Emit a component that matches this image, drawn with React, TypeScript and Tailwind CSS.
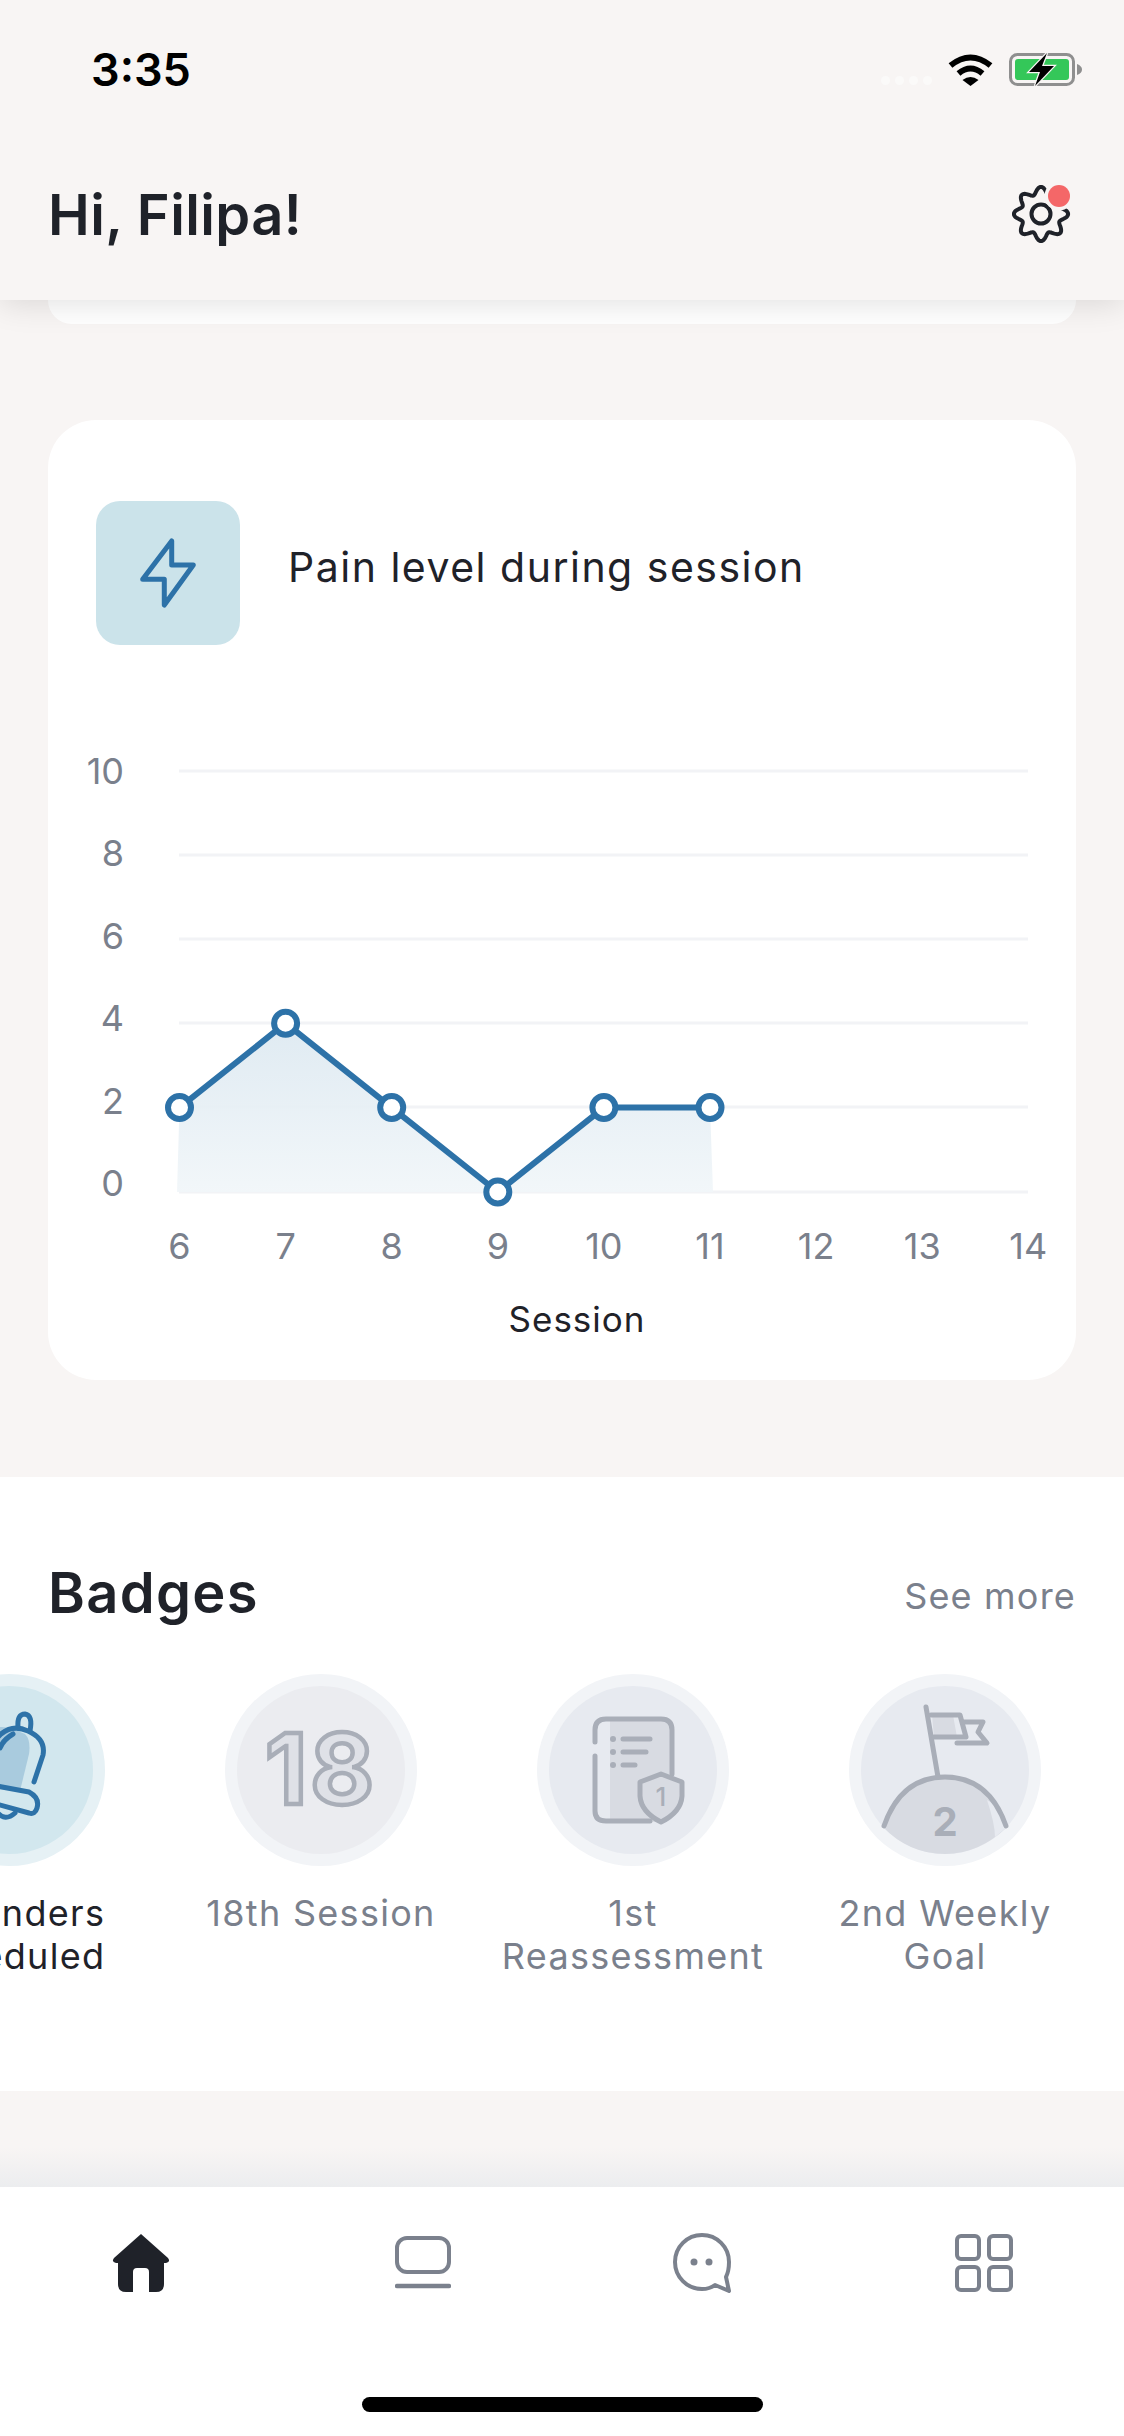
import React from "react";

const blue = "#2d72a8";
const grey = "#a9aeb8";
const greyFill = "#d8dbe2";

function gearPath() {
  const pts: string[] = [];
  for (let i = 0; i <= 240; i++) {
    const t = (i / 240) * Math.PI * 2;
    const r = 23.5 + 3.6 * Math.cos(8 * (t + Math.PI / 2));
    pts.push(`${(29 + r * Math.cos(t)).toFixed(2)} ${(29 + r * Math.sin(t)).toFixed(2)}`);
  }
  return "M" + pts.join("L") + "Z";
}

function Wifi() {
  return (
    <svg width="45" height="33" viewBox="0 0 45 33" fill="none" stroke="#000">
      <path d="M2.5 12.5Q22.5 -3.5 42.5 12.5" strokeWidth="6" />
      <path d="M10.5 20.5Q22.5 10.5 34.5 20.5" strokeWidth="6" />
      <path d="M14.5 27Q22.5 21 30.5 27L22.5 33Z" fill="#000" stroke="none" />
    </svg>
  );
}

function Battery() {
  return (
    <svg width="73" height="35" viewBox="0 0 73 35" fill="none">
      <rect x="1.5" y="2.5" width="63" height="30" rx="7" stroke="#8f8f8f" strokeWidth="3" />
      <rect x="6" y="7" width="54" height="21" rx="3" fill="#34c759" />
      <path d="M68 12q5 2 5 5.500t-5 5.500z" fill="#8f8f8f" />
      <path d="M38 1L20 20h11l-5 14 19-20H33z" fill="#000" stroke="#f8f5f4" strokeWidth="2.500" paintOrder="stroke" />
    </svg>
  );
}

function Gear() {
  return (
    <svg width="60" height="60" viewBox="0 0 60 60" fill="none">
      <path d={gearPath()} stroke="#1f2229" strokeWidth="4" />
      <circle cx="29" cy="29" r="9.500" stroke="#1f2229" strokeWidth="4" />
      <circle cx="47" cy="11" r="14.500" fill="#f8f5f4" />
      <circle cx="47" cy="11" r="11" fill="#f46768" />
    </svg>
  );
}

function Chart() {
  const xs = [6, 7, 8, 9, 10, 11, 12, 13, 14];
  const x = (i: number) => 179.5 + 106.1 * i;
  const gridY = [771, 855, 939, 1023, 1107, 1192];
  const labelY = [1183, 1101, 1018, 936, 853, 771];
  const data = [2, 4, 2, 0, 2, 2];
  const y = (v: number) => 1192 - v * 42.2;
  const line = data.map((v, i) => `${x(i)},${y(v)}`).join(" ");
  return (
    <svg width="1029" height="660" viewBox="48 720 1029 660" className="block">
      <defs>
        <linearGradient id="area" x1="0" y1="0" x2="0" y2="1">
          <stop offset="0" stopColor="#dde9f1" />
          <stop offset="1" stopColor="#f1f6f9" />
        </linearGradient>
      </defs>
      {gridY.map((g) => (
        <line key={g} x1="179" x2="1028" y1={g} y2={g} stroke="#f2f3f6" strokeWidth="3" />
      ))}
      <polygon points={`177,1192 ${line} 713,1192`} fill="url(#area)" fillOpacity="0.93" />
      <polyline points={line} fill="none" stroke={blue} strokeWidth="6" strokeLinejoin="round" />
      {data.map((v, i) => (
        <circle key={i} cx={x(i)} cy={y(v)} r="11.500" fill="#fff" stroke={blue} strokeWidth="6" />
      ))}
      {["0", "2", "4", "6", "8", "10"].map((t, i) => (
        <text key={t} x="124" y={labelY[i]} dy="0.36em" textAnchor="end" fontSize="36" fill="#7a808c">
          {t}
        </text>
      ))}
      {xs.map((t, i) => (
        <text key={t} x={x(i)} y="1246" dy="0.36em" textAnchor="middle" fontSize="36" fill="#7a808c">
          {t}
        </text>
      ))}
      <text x="577" y="1319" dy="0.36em" textAnchor="middle" fontSize="35" fill="#1f2229" letterSpacing="1">
        Session
      </text>
    </svg>
  );
}

function BellBadge() {
  return (
    <svg width="192" height="192" viewBox="0 0 192 192" fill="none">
      <circle cx="96" cy="96" r="96" fill="#e6f1f5" />
      <circle cx="96" cy="96" r="84" fill="#d2e7ee" />
      <path d="M60 112L70 66Q78 48 100 55L112 60Q118 66 116 80L107 117Z" fill="#a9cbde" />
      <g stroke={blue} strokeWidth="5" strokeLinecap="round" strokeLinejoin="round">
        <path d="M105 53Q104 40 112 40Q120 41 117 57" />
        <path d="M121 108L130 81Q133 65 115 57Q100 50 88 60Q84 64 78 70" />
        <path d="M87 74Q90 66 100 60" />
        <path d="M40 104L116 118Q127 124 124 134Q122 141 116 139L40 118" />
        <path d="M84 138Q92 148 102 139" />
      </g>
    </svg>
  );
}

function EighteenBadge() {
  return (
    <svg width="192" height="192" viewBox="0 0 192 192" fill="none">
      <circle cx="96" cy="96" r="96" fill="#f2f4f7" />
      <circle cx="96" cy="96" r="84" fill="#ebecf0" />
      <text x="96" y="130" textAnchor="middle" fontSize="98" fontWeight="700" fill="#dfe1e7" stroke={grey} strokeWidth="4.500" letterSpacing="3">
        18
      </text>
    </svg>
  );
}

function ReassessBadge() {
  return (
    <svg width="192" height="192" viewBox="0 0 192 192" fill="none">
      <circle cx="96" cy="96" r="96" fill="#f2f4f7" />
      <circle cx="96" cy="96" r="84" fill="#e7eaf0" />
      <path d="M73 45H126Q135 45 135 54V140Q135 148 126 148H73Z" fill={greyFill} />
      <g stroke={grey} strokeWidth="5" strokeLinecap="round" strokeLinejoin="round">
        <path d="M58 68V56Q58 45 69 45H124Q135 45 135 56V100" />
        <path d="M58 82V137Q58 147 69 147H113" />
        <path d="M86 65H113M86 78H109M86 91H98" />
        <path d="M124 100L145 108V122Q144 138 124 148Q104 138 103 122V108Z" fill={greyFill} />
      </g>
      <circle cx="76" cy="65" r="3" fill={grey} />
      <circle cx="76" cy="78" r="3" fill={grey} />
      <circle cx="76" cy="91" r="3" fill={grey} />
      <text x="124" y="132" textAnchor="middle" fontSize="26" fontWeight="500" fill={grey}>
        1
      </text>
    </svg>
  );
}

function FlagBadge() {
  return (
    <svg width="192" height="192" viewBox="0 0 192 192" fill="none">
      <circle cx="96" cy="96" r="96" fill="#f2f4f7" />
      <circle cx="96" cy="96" r="84" fill="#e7eaf0" />
      <path d="M34 153Q52 103 96 103Q140 103 158 153Q130 180 96 180Q60 180 34 153Z" fill={greyFill} />
      <path d="M138 126Q146 150 146 163L158 153Q150 132 138 126Z" fill="#e7eaf0" />
      <path d="M83 41H104L108 63H85Z" fill={greyFill} />
      <g stroke={grey} strokeWidth="5" strokeLinecap="round" strokeLinejoin="round">
        <path d="M77 33L89 103" />
        <path d="M82 41H111L117 63H85" />
        <path d="M114 48H134L129 58L138 69H108" />
        <path d="M35 152Q52 103 96 103Q140 103 157 152" />
      </g>
      <text x="96" y="162" textAnchor="middle" fontSize="40" fontWeight="700" fill={grey}>
        2
      </text>
    </svg>
  );
}

function Badge({ icon, lines, dark }: { icon: React.ReactNode; lines: string[]; dark?: boolean }) {
  return (
    <div className="flex w-[312px] shrink-0 flex-col items-center">
      {icon}
      <div className={`mt-[26px] whitespace-nowrap text-center text-[36px] leading-[43px] tracking-[1.300px] ${dark ? "text-[#1f2229]" : "text-[#7a808c]"}`}>
        {lines.map((l) => (
          <div key={l}>{l}</div>
        ))}
      </div>
    </div>
  );
}

function NavIcons() {
  const c = "#7b818d";
  return (
    <div className="relative h-[58px] w-full">
      <div className="flex items-center">
        <svg className="ml-[112px]" width="58" height="58" viewBox="0 0 58 58">
          <path d="M29 0L56 24Q59 28 54 29H52V50Q52 58 44 58H37V38Q37 34 33 34H25Q21 34 21 38V58H14Q6 58 6 50V29H4Q-1 28 2 24Z" fill="#1f2229" />
        </svg>
        <svg className="ml-[225px]" width="56" height="58" viewBox="0 0 56 58" fill="none" stroke={c}>
          <rect x="2" y="4" width="52" height="34" rx="10" strokeWidth="4" />
          <path d="M2 52H54" strokeWidth="4.500" strokeLinecap="round" />
        </svg>
        <svg className="ml-[222px]" width="60" height="60" viewBox="0 0 60 60" fill="none">
          <path d="M29 2C14 2 2 14 2 29S14 56 29 56C34 56 38 55 42 52L56 58L53 44C55 40 56 35 56 29C56 14 44 2 29 2Z" stroke={c} strokeWidth="4" strokeLinejoin="round" />
          <circle cx="21" cy="29" r="3.500" fill={c} />
          <circle cx="36" cy="29" r="3.500" fill={c} />
        </svg>
        <svg className="ml-[222px]" width="58" height="58" viewBox="0 0 58 58" fill="none" stroke={c} strokeWidth="4">
          <rect x="2" y="2" width="22" height="23" rx="4" />
          <rect x="34" y="2" width="22" height="23" rx="4" />
          <rect x="2" y="33" width="22" height="23" rx="4" />
          <rect x="34" y="33" width="22" height="23" rx="4" />
        </svg>
      </div>
    </div>
  );
}

export default function App() {
  return (
    <div className="flex h-[2436px] w-[1124px] flex-col overflow-hidden bg-[#f8f5f4] font-['Inter',sans-serif]">
      <header className="relative z-10 h-[300px] shrink-0 bg-[#f8f5f4] shadow-[0_4px_30px_rgba(0,0,0,0.12)]">
        <div className="flex h-[138px] items-center pl-[91px] pr-[42px]">
          <span className="text-[45px] font-semibold leading-none text-black">3:35</span>
          <div className="ml-auto flex items-center">
            <div className="mr-[16px] mt-[22px] flex gap-[5px]">
              {[0, 1, 2, 3].map((d) => (
                <span key={d} className="size-[9px] rounded-full bg-[#fbfaf9]" />
              ))}
            </div>
            <Wifi />
            <div className="ml-[16px]">
              <Battery />
            </div>
          </div>
        </div>
        <div className="flex h-[154px] items-center justify-between pl-[48px] pr-[52px]">
          <h1 className="text-[56px] font-semibold leading-none tracking-[0.4px] text-[#1f2229]">Hi, Filipa!</h1>
          <Gear />
        </div>
      </header>

      <main className="relative flex-1 overflow-hidden">
        <div className="mx-[48px] h-[24px] rounded-b-[48px] bg-white" />
        <section className="mx-[48px] mt-[96px] h-[960px] rounded-[48px] bg-white">
          <div className="flex pl-[48px] pt-[81px]">
            <div className="flex size-[144px] items-center justify-center rounded-[24px] bg-[#cbe3ea]">
              <svg width="60" height="72" viewBox="0 0 60 72" fill="none">
                <path d="M33.700 4V28H55.300L26.300 68V42.300H4.700Z" stroke={blue} strokeWidth="5" strokeLinejoin="round" />
              </svg>
            </div>
            <p className="ml-[48px] mt-[42px] text-[41px] leading-[48px] tracking-[1.500px] text-[#1f2229]">Pain level during session</p>
          </div>
          <div className="mt-[75px]">
            <Chart />
          </div>
        </section>

        <section className="mt-[97px] h-[614px] bg-white">
          <div className="flex items-center justify-between px-[48px] pt-[86px]">
            <h2 className="text-[56px] font-semibold leading-[60px] tracking-[1.300px] text-[#1f2229]">Badges</h2>
            <span className="mt-[6px] text-[36px] leading-[44px] tracking-[1.200px] text-[#7a808c]">See more</span>
          </div>
          <div className="ml-[-147px] mt-[51px] flex">
            <Badge icon={<BellBadge />} lines={["Reminders", "Scheduled"]} dark />
            <Badge icon={<EighteenBadge />} lines={["18th Session"]} />
            <Badge icon={<ReassessBadge />} lines={["1st", "Reassessment"]} />
            <Badge icon={<FlagBadge />} lines={["2nd Weekly", "Goal"]} />
          </div>
        </section>
        <div className="absolute bottom-0 left-0 h-[40px] w-full bg-gradient-to-b from-transparent to-[#ecedef]" />
      </main>

      <footer className="relative h-[249px] shrink-0 bg-white pt-[46px]">
        <NavIcons />
        <div className="absolute bottom-[24px] left-[362px] h-[15px] w-[401px] rounded-full bg-black" />
      </footer>
    </div>
  );
}
